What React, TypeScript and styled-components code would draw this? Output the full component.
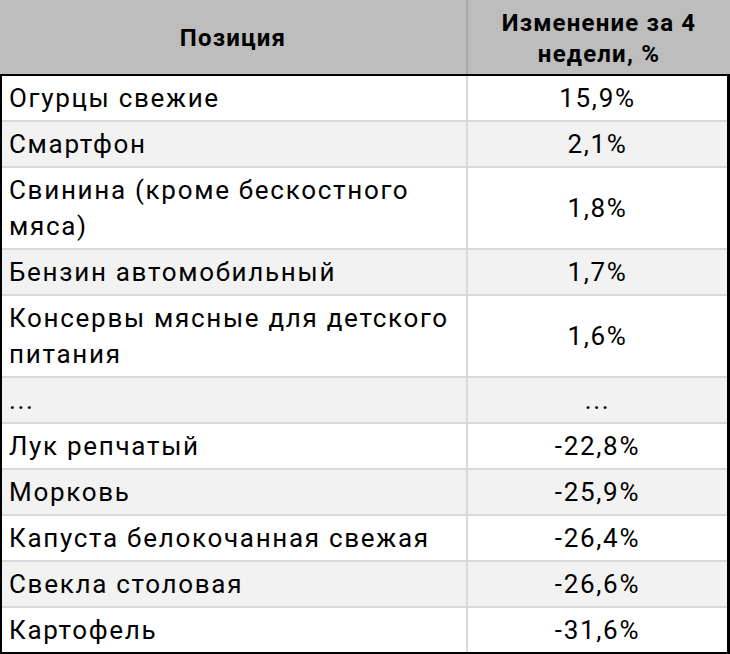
import styled, { createGlobalStyle } from "styled-components"

const GlobalStyle = createGlobalStyle`
html, body {
    margin: 0;
    padding: 0;
    background: #ffffff;
}
body {
    font-family: Roboto, "Liberation Sans", Arial, sans-serif;
    color: #000000;
}
`

type Item = { name: string; value: string }

const items: Item[] = [
    { name: "Огурцы свежие", value: "15,9%" },
    { name: "Смартфон", value: "2,1%" },
    { name: "Свинина (кроме бескостного мяса)", value: "1,8%" },
    { name: "Бензин автомобильный", value: "1,7%" },
    { name: "Консервы мясные для детского питания", value: "1,6%" },
    { name: "...", value: "..." },
    { name: "Лук репчатый", value: "-22,8%" },
    { name: "Морковь", value: "-25,9%" },
    { name: "Капуста белокочанная свежая", value: "-26,4%" },
    { name: "Свекла столовая", value: "-26,6%" },
    { name: "Картофель", value: "-31,6%" },
]

const App = () => {
    return (
        <>
            <GlobalStyle />
            <Table>
                <HeaderRow>
                    <HeadCell>Позиция</HeadCell>
                    <HeadCell>
                        Изменение за 4<br />недели, %
                    </HeadCell>
                </HeaderRow>
                <Body>
                    {items.map((it, i) => (
                        <Row key={i}>
                            <NameCell $shade={i % 2 === 1}>{it.name}</NameCell>
                            <ValueCell $shade={i % 2 === 1}>{it.value}</ValueCell>
                        </Row>
                    ))}
                </Body>
            </Table>
        </>
    )
}

export default App

const Table = styled.div`
width: 730px;
height: 654px;
box-sizing: border-box;
display: flex;
flex-direction: column;
overflow: hidden;
`

const HeaderRow = styled.div`
display: grid;
grid-template-columns: 466px 1fr;
column-gap: 2px;
height: 74px;
flex-shrink: 0;
background-color: #a9a9a9;
border-bottom: 2px solid #000000;
`

const HeadCell = styled.div`
background-color: #bdbdbd;
display: flex;
align-items: center;
justify-content: center;
text-align: center;
font-size: 24px;
font-weight: 700;
letter-spacing: 1.2px;
line-height: 31px;
padding-top: 3px;
`

const Body = styled.div`
display: flex;
flex-direction: column;
gap: 2px;
background-color: #d9d9d9;
border-left: 2px solid #000000;
border-right: 3px solid #000000;
border-bottom: 2px solid #000000;
`

const Row = styled.div`
display: grid;
grid-template-columns: 464px 1fr;
column-gap: 2px;
`

const Cell = styled.div<{ $shade: boolean }>`
background-color: ${(p) => (p.$shade ? "#f2f2f2" : "#ffffff")};
font-size: 26px;
letter-spacing: 1.7px;
line-height: 36px;
padding: 4px 6px;
display: flex;
align-items: center;
`

const NameCell = styled(Cell)`
padding-left: 7px;
`

const ValueCell = styled(Cell)`
justify-content: center;
`
